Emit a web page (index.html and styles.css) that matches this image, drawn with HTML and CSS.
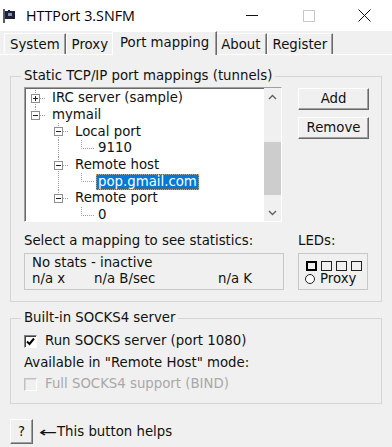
FILE: index.html
```html
<!DOCTYPE html>
<html lang="en">
<head>
  <meta charset="UTF-8">
  <title>HTTPort 3.SNFM</title>
  <link rel="stylesheet" href="styles.css">
</head>
<body>
  <div class="window">
    <div class="titlebar">
      <svg class="app-icon" width="12" height="14" viewBox="0 0 12 14">
        <rect x="0" y="0" width="2" height="14" fill="#5a5a5a"/>
        <path d="M2 2h3v-1h2v1h5v8h-10z" fill="#1d2138"/>
        <rect x="5" y="4" width="4" height="3" fill="#8d93b8"/>
      </svg>
      <span class="title">HTTPort 3.SNFM</span>
      <div class="controls">
        <span class="ctl"><svg width="12" height="2"><path d="M0 0.5H12" stroke="#111" stroke-width="1"/></svg></span>
        <span class="ctl"><svg width="12" height="12"><rect x="0.5" y="0.5" width="11" height="11" fill="none" stroke="#c8c8c8"/></svg></span>
        <span class="ctl ctl-close"><svg width="13" height="13"><path d="M0.5 0.5L12.5 12.5M12.5 0.5L0.5 12.5" stroke="#111" stroke-width="1"/></svg></span>
      </div>
    </div>

    <div class="tabs">
      <span class="tab">System</span>
      <span class="tab">Proxy</span>
      <span class="tab active">Port mapping</span>
      <span class="tab">About</span>
      <span class="tab">Register</span>
    </div>

    <div class="page">
      <fieldset class="group group-map">
        <legend>Static TCP/IP port mappings (tunnels)</legend>
        <div class="map-grid">
          <div class="tree">
            <div class="tree-rows">
              <div class="row">
                <svg class="gut" width="24" height="17"><path class="dots" d="M9.5 0V17M14 8.5H20"/><rect class="box" x="5.5" y="4.5" width="8" height="8"/><path class="sign" d="M7 8.5h5M9.5 6v5"/></svg>
                <span class="node">IRC server (sample)</span>
              </div>
              <div class="row">
                <svg class="gut" width="24" height="17"><path class="dots" d="M9.5 0V4M14 8.5H20"/><rect class="box" x="5.5" y="4.5" width="8" height="8"/><path class="sign" d="M7 8.5h5"/></svg>
                <span class="node">mymail</span>
              </div>
              <div class="row">
                <svg class="gut" width="47" height="17"><path class="dots" d="M32.5 0V17M37 8.5H43"/><rect class="box" x="28.5" y="4.5" width="8" height="8"/><path class="sign" d="M30 8.5h5"/></svg>
                <span class="node">Local port</span>
              </div>
              <div class="row">
                <svg class="gut" width="70" height="17"><path class="dots" d="M32.5 0V17M55.5 0V8.5H68"/></svg>
                <span class="node">9110</span>
              </div>
              <div class="row">
                <svg class="gut" width="47" height="17"><path class="dots" d="M32.5 0V17M37 8.5H43"/><rect class="box" x="28.5" y="4.5" width="8" height="8"/><path class="sign" d="M30 8.5h5"/></svg>
                <span class="node">Remote host</span>
              </div>
              <div class="row">
                <svg class="gut" width="70" height="17"><path class="dots" d="M32.5 0V17M55.5 0V8.5H68"/></svg>
                <span class="node sel">pop.gmail.com</span>
              </div>
              <div class="row">
                <svg class="gut" width="47" height="17"><path class="dots" d="M32.5 0V4M37 8.5H43"/><rect class="box" x="28.5" y="4.5" width="8" height="8"/><path class="sign" d="M30 8.5h5"/></svg>
                <span class="node">Remote port</span>
              </div>
              <div class="row">
                <svg class="gut" width="70" height="17"><path class="dots" d="M55.5 0V8.5H68"/></svg>
                <span class="node">0</span>
              </div>
            </div>
            <div class="scrollbar">
              <span class="sb-btn"><svg width="9" height="6"><path d="M1 5L4.5 1.5L8 5" fill="none" stroke="#606060" stroke-width="1.4"/></svg></span>
              <span class="sb-track"><span class="sb-thumb"></span></span>
              <span class="sb-btn"><svg width="9" height="6"><path d="M1 1L4.5 4.5L8 1" fill="none" stroke="#606060" stroke-width="1.4"/></svg></span>
            </div>
          </div>

          <div class="side-buttons">
            <button class="btn">Add</button>
            <button class="btn">Remove</button>
          </div>

          <div class="caption">Select a mapping to see statistics:</div>
          <div class="caption">LEDs:</div>

          <div class="stats">
            <div>No stats - inactive</div>
            <div class="stats-line">
              <span>n/a x</span>
              <span>n/a B/sec</span>
              <span>n/a K</span>
            </div>
          </div>

          <div class="leds">
            <div class="led-row">
              <span class="led on"></span>
              <span class="led"></span>
              <span class="led"></span>
              <span class="led"></span>
            </div>
            <div class="proxy"><span class="radio"></span>Proxy</div>
          </div>
        </div>
      </fieldset>

      <fieldset class="group group-socks">
        <legend>Built-in SOCKS4 server</legend>
        <div class="check-row">
          <span class="check"><svg width="11" height="11"><path d="M2 5.5L4.5 8L9 2.5" fill="none" stroke="#000" stroke-width="2"/></svg></span>
          Run SOCKS server (port 1080)
        </div>
        <div class="note">Available in "Remote Host" mode:</div>
        <div class="check-row disabled">
          <span class="check"></span>
          Full SOCKS4 support (BIND)
        </div>
      </fieldset>

      <div class="help-row">
        <button class="btn help">?</button>
        <span class="hint"><span class="arrow">←</span>This button helps</span>
      </div>
    </div>
  </div>
</body>
</html>
```

FILE: styles.css
```css
* { box-sizing: border-box; }
body {
  margin: 0;
  background: #f0f0f0;
  font: 13.3px/16px "DejaVu Sans", Verdana, sans-serif;
  color: #111;
}
.window {
  width: 392px;
  height: 447px;
  overflow: hidden;
}

/* title bar */
.titlebar {
  height: 31px;
  background: #fff;
  display: flex;
  align-items: center;
}
.app-icon {
  flex: none;
  margin-left: 3px;
}
.title {
  margin-left: 11px;
  font: 14.3px "Open Sans", "Noto Sans", sans-serif;
  color: #000;
}
.controls {
  margin-left: auto;
  display: flex;
  height: 100%;
}
.ctl {
  width: 57px;
  display: flex;
  align-items: center;
  justify-content: center;
}
.ctl-close { width: 55px; }

/* tabs */
.tabs {
  height: 24px;
  display: flex;
  align-items: flex-end;
  padding-left: 4px;
  border-bottom: 1px solid #fff;
}
.tab {
  height: 21px;
  line-height: 21px;
  padding: 0 5px;
  border-top: 1px solid #fff;
  border-left: 1px solid #fff;
  border-right: 1px solid #696969;
  box-shadow: inset -1px 0 #a0a0a0;
}
.tab.active {
  height: 24px;
  line-height: 22px;
  padding: 0 7px;
  margin: 0 -2px -1px;
  background: #f0f0f0;
  position: relative;
}

/* page */
.page {
  padding: 0 10px;
}
.group {
  margin: 0;
  min-width: 0;
  border: 1px solid #d5d5d5;
  padding: 3px 12px 11px 13px;
}
.group legend {
  padding: 0 3px;
  margin-left: -3px;
  line-height: 16px;
}
.group-map { margin-top: 13px; }
.group-socks {
  margin-top: 8px;
  padding-top: 0;
}

.map-grid {
  display: grid;
  grid-template-columns: 260px 71px;
  column-gap: 14px;
}

/* tree view */
.tree {
  width: 258px;
  height: 135px;
  display: flex;
  background: #fff;
  border: 1px solid;
  border-color: #a0a0a0 #fff #fff #a0a0a0;
  box-shadow: inset 1px 1px #696969;
}
.tree-rows {
  flex: 1;
  overflow: hidden;
  padding: 2px 0 0 1px;
}
.row {
  height: 16.7px;
  display: flex;
  align-items: center;
  white-space: nowrap;
}
.gut {
  flex: none;
  display: block;
}
.dots {
  fill: none;
  stroke: #a0a0a0;
  stroke-dasharray: 1 1;
}
.box {
  fill: #fff;
  stroke: #8e8e8e;
}
.sign {
  stroke: #222;
}
.node {
  padding: 0 2px;
  line-height: 16px;
}
.node.sel {
  background: #0078d7;
  color: #fff;
  outline: 1px dotted #e49a4c;
  outline-offset: -1px;
}
.scrollbar {
  width: 17px;
  flex: none;
  display: flex;
  flex-direction: column;
  background: #f0f0f0;
}
.sb-btn {
  height: 17px;
  display: flex;
  align-items: center;
  justify-content: center;
}
.sb-track {
  flex: 1;
}
.sb-thumb {
  display: block;
  height: 53px;
  margin-top: 37px;
  background: #cdcdcd;
}

/* buttons */
.btn {
  font: inherit;
  color: inherit;
  background: #f0f0f0;
  padding: 0;
  border: 1px solid;
  border-color: #fff #696969 #696969 #fff;
  box-shadow: inset -1px -1px #a0a0a0;
}
.side-buttons {
  display: flex;
  flex-direction: column;
  gap: 7px;
  padding-top: 1px;
}
.side-buttons .btn {
  width: 71px;
  height: 22px;
}

/* stats + leds */
.caption {
  margin-top: 11px;
}
.stats,
.leds {
  margin-top: 4px;
  height: 37px;
  border: 1px solid #c8c8c8;
}
.stats {
  padding: 1px 7px 0;
}
.stats-line {
  display: grid;
  grid-template-columns: 62px 124px auto;
}
.leds {
  width: 70px;
  padding: 7px 0 0 7px;
}
.led-row {
  display: flex;
  gap: 4px;
}
.led {
  width: 11px;
  height: 10px;
  border: 1px solid #222;
}
.led.on {
  border: 2px solid #000;
}
.proxy {
  display: flex;
  align-items: center;
  gap: 5px;
  margin-left: -1px;
}
.radio {
  width: 10px;
  height: 10px;
  border: 1.5px solid #222;
  border-radius: 50%;
  background: #fff;
}

/* socks */
.check-row {
  height: 16px;
  display: flex;
  align-items: center;
  gap: 8px;
  margin-top: 7px;
}
.check {
  width: 13px;
  height: 13px;
  flex: none;
  background: #fff;
  border: 1px solid;
  border-color: #808080 #fff #fff #808080;
  box-shadow: inset 1px 1px #404040;
  display: flex;
  align-items: center;
  justify-content: center;
}
.note {
  margin-top: 6px;
}
.check-row.disabled {
  margin-top: 5px;
  color: #a8a8a8;
}
.check-row.disabled .check {
  background: #f0f0f0;
  border-color: #c0c0c0 #fff #fff #c0c0c0;
  box-shadow: inset 1px 1px #d8d8d8;
}

/* help */
.help-row {
  margin-top: 15px;
  display: flex;
  align-items: center;
  gap: 6px;
}
.help {
  width: 23px;
  height: 25px;
}
.hint {
  display: flex;
  align-items: center;
}
.arrow {
  display: inline-block;
  width: 18px;
  font: 14px/16px "DejaVu Sans", sans-serif;
  transform: scaleX(1.55);
  transform-origin: left center;
}
```
